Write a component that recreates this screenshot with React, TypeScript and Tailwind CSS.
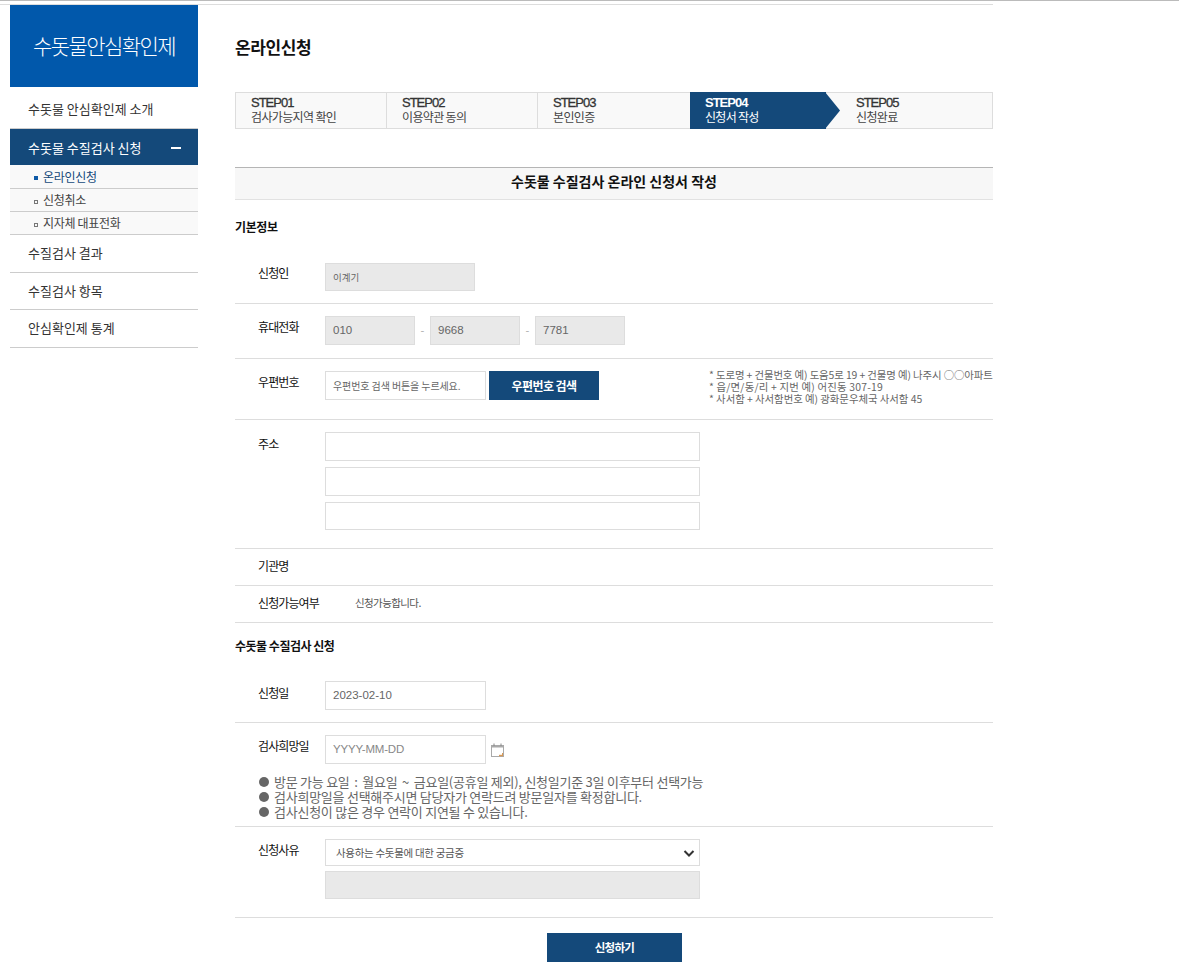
import React from "react";

const font = { fontFamily: '"Noto Sans CJK KR", "Noto Sans", sans-serif' };
const latin = { fontFamily: '"Liberation Sans", "Noto Sans CJK KR", sans-serif' };

function Step({ no, label, w, last }: { no: string; label: string; w: string; last?: boolean }) {
  return (
    <div className={`${w} h-full pl-[15px] pt-[3px] ${last ? "" : "border-r border-[#dddddd]"} text-[#333] leading-[14px]`}>
      <div style={latin} className="text-[13px] tracking-[-1px] [-webkit-text-stroke:0.3px_#333]">{no}</div>
      <div className="text-[12px] tracking-[-0.65px] text-[#444]">{label}</div>
    </div>
  );
}

function Label({ children, className = "" }: { children: React.ReactNode; className?: string }) {
  return <div className={`pl-[23px] text-[12px] leading-[16px] text-[#111] tracking-[-0.9px] shrink-0 ${className || "w-[90px]"}`}>{children}</div>;
}

function Box({ children, className = "" }: { children?: React.ReactNode; className?: string }) {
  return <div className={`border border-[#dddddd] flex items-center px-[7px] text-[#666] shrink-0 ${className}`}>{children}</div>;
}

function Side({ children, className }: { children: React.ReactNode; className: string }) {
  return <div className={`border-b border-[#cccccc] flex items-center pl-[18px] text-[13px] text-[#333] ${className}`}>{children}</div>;
}

function Sub({ children, active, h = "h-[23px]" }: { children: React.ReactNode; active?: boolean; h?: string }) {
  return (
    <div className={`${h} bg-[#f9f9f9] border-b border-[#cccccc] flex items-center pl-[24px] text-[12px] tracking-[-0.3px] ${active ? "text-[#14497a]" : "text-[#444]"}`}>
      <span className={`w-[4px] h-[4px] mr-[5px] mt-[3px] ${active ? "bg-[#0e5aa7]" : "border border-[#777]"}`} />
      {children}
    </div>
  );
}

function Bullet({ children }: { children: React.ReactNode }) {
  return (
    <li className="flex items-center">
      <span className="w-[10px] h-[10px] rounded-full bg-[#666] mr-[5px]" />
      <span>{children}</span>
    </li>
  );
}

export default function App() {
  return (
    <div style={font} className="w-full h-[970px] overflow-hidden bg-white border-t border-[#bbbbbb]">
      <div className="w-[993px] h-[4px] border-b border-[#dddddd]" />
      <div className="flex">
        <aside className="ml-[10px] w-[188px] shrink-0">
          <div className="h-[82px] bg-[#0158ab] text-white text-[21px] flex items-center justify-center tracking-[-1.6px] font-light">수돗물안심확인제</div>
          <Side className="h-[42px] pt-[3px]">수돗물 안심확인제 소개</Side>
          <div className="h-[36px] pt-[1px] bg-[#14497a] text-white flex items-center justify-between pl-[18px] pr-[17px] text-[13px]">
            수돗물 수질검사 신청
            <span className="w-[10px] h-[2px] bg-white" />
          </div>
          <Sub active h="h-[24px]">온라인신청</Sub>
          <Sub>신청취소</Sub>
          <Sub>지자체 대표전화</Sub>
          <Side className="h-[38px] pb-[2px]">수질검사 결과</Side>
          <Side className="h-[37px]">수질검사 항목</Side>
          <Side className="h-[38px] pb-[2px]">안심확인제 통계</Side>
        </aside>

        <main className="ml-[37px] w-[758px] shrink-0">
          <h1 className="h-[87px] pt-[30px] text-[17px] leading-[24px] font-bold text-[#111] tracking-[-0.4px]">온라인신청</h1>

          <div className="h-[37px] border border-[#dddddd] bg-[#f9f9f9] flex">
            <Step no="STEP01" label="검사가능지역 확인" w="w-[151px]" />
            <Step no="STEP02" label="이용약관 동의" w="w-[151px]" />
            <Step no="STEP03" label="본인인증" w="w-[152px]" last />
            <div className="relative w-[136px] h-[37px] -mt-px bg-[#14497a] text-white pl-[15px] pt-[4px] leading-[14px]">
              <div style={latin} className="text-[13px] font-bold tracking-[-1px]">STEP04</div>
              <div className="text-[12px] tracking-[-0.7px]">신청서 작성</div>
              <svg className="absolute left-[135px] top-0" width="15" height="37" viewBox="0 0 15 37"><path d="M0 0L15 18.5L0 37Z" fill="#14497a" /></svg>
            </div>
            <div className="pl-[30px] pt-[3px] text-[#333] leading-[14px]">
              <div style={latin} className="text-[13px] tracking-[-1px] [-webkit-text-stroke:0.3px_#333]">STEP05</div>
              <div className="text-[12px] tracking-[-0.65px] text-[#444]">신청완료</div>
            </div>
          </div>

          <div className="mt-[38px] h-[33px] pb-[4px] bg-[#f7f7f7] border-t border-b border-t-[#b5b5b5] border-b-[#e2e2e2] flex items-center justify-center text-[14px] font-bold text-[#111]">수돗물 수질검사 온라인 신청서 작성</div>

          <div className="h-[63px] pt-[19px] text-[12px] leading-[16px] font-bold text-[#111] tracking-[-0.4px]">기본정보</div>

          <div className="h-[41px] border-b border-[#dddddd] flex">
            <Label className="w-[90px] pt-[2px]">신청인</Label>
            <Box className="w-[150px] h-[28px] bg-[#e9e9e9] text-[9.5px]">이계기</Box>
          </div>

          <div className="h-[55px] border-b border-[#dddddd] flex pt-[12px]">
            <Label className="w-[90px] pt-[3px]">휴대전화</Label>
            <Box className="w-[90px] h-[29px] bg-[#e9e9e9] text-[11.5px]"><span style={latin}>010</span></Box>
            <span className="w-[15px] text-center text-[11px] leading-[29px] text-[#aaa]">-</span>
            <Box className="w-[90px] h-[29px] bg-[#e9e9e9] text-[11.5px]"><span style={latin}>9668</span></Box>
            <span className="w-[15px] text-center text-[11px] leading-[29px] text-[#aaa]">-</span>
            <Box className="w-[90px] h-[29px] bg-[#e9e9e9] text-[11.5px]"><span style={latin}>7781</span></Box>
          </div>

          <div className="h-[61px] border-b border-[#dddddd] flex pt-[12px]">
            <Label className="w-[90px] pt-[3px]">우편번호</Label>
            <Box className="w-[161px] h-[29px] text-[10px] tracking-[-0.1px]">우편번호 검색 버튼을 누르세요.</Box>
            <div className="ml-[3px] w-[110px] h-[29px] bg-[#14497a] text-white text-[12px] font-bold tracking-[-0.6px] flex items-center justify-center shrink-0">우편번호 검색</div>
            <div className="ml-[110px] -mt-[2px] text-[10.4px] leading-[12px] text-[#666] whitespace-nowrap tracking-[-0.1px]">
              <div>* 도로명 + 건물번호 예) 도움5로 19 + 건물명 예) 나주시 ○○아파트</div>
              <div className="tracking-[0.2px]">* 읍/면/동/리 + 지번 예) 어진동 307-19</div>
              <div className="tracking-[-0.03px]">* 사서함 + 사서함번호 예) 광화문우체국 사서함 45</div>
            </div>
          </div>

          <div className="h-[129px] border-b border-[#dddddd] flex pt-[12px]">
            <Label className="w-[90px] pt-[4px]">주소</Label>
            <div className="flex flex-col gap-[6px]">
              <Box className="w-[375px] h-[29px]" />
              <Box className="w-[375px] h-[29px]" />
              <Box className="w-[375px] h-[28px]" />
            </div>
          </div>

          <div className="h-[37px] pb-[2px] border-b border-[#dddddd] flex items-center">
            <Label className="w-[90px]">기관명</Label>
          </div>

          <div className="h-[37px] pb-[2px] border-b border-[#dddddd] flex items-center">
            <Label className="w-[120px]">신청가능여부</Label>
            <span className="text-[10.5px] text-[#555] tracking-[-0.6px]">신청가능합니다.</span>
          </div>

          <div className="h-[58px] pt-[15px] text-[12px] leading-[16px] font-bold text-[#111] tracking-[-0.5px]">수돗물 수질검사 신청</div>

          <div className="h-[42px] border-b border-[#dddddd] flex">
            <Label className="w-[90px] pt-[4px]">신청일</Label>
            <Box className="w-[161px] h-[29px] text-[11.5px]"><span style={latin}>2023-02-10</span></Box>
          </div>

          <div className="h-[104px] border-b border-[#dddddd] pt-[12px]">
            <div className="flex">
              <Label className="w-[90px] pt-[3px]">검사희망일</Label>
              <Box className="w-[161px] h-[29px] text-[11.5px] tracking-[-0.2px] text-[#888]"><span style={latin}>YYYY-MM-DD</span></Box>
              <svg className="ml-[5px] mt-[8px]" width="13" height="14" viewBox="0 0 13 14" fill="none">
                <rect x="0.5" y="2.5" width="12" height="11" fill="#fff" stroke="#a9a9a9" />
                <rect x="0.5" y="2.5" width="12" height="2" fill="#a9a9a9" />
                <path d="M3 0.5V3M10 0.5V3" stroke="#888" />
                <path d="M8 12.5H12" stroke="#d99a55" strokeWidth="1.4" />
                <path d="M11.5 10V12.5" stroke="#d99a55" />
              </svg>
            </div>
            <ul className="mt-[10px] pl-[24px] text-[13px] leading-[15px] text-[#666] tracking-[-0.25px] whitespace-nowrap">
              <Bullet>방문 가능 요일 <span className="mx-[2px]">:</span> 월요일 <span className="mx-[2px]">~</span> 금요일(공휴일 제외), 신청일기준 3일 이후부터 선택가능</Bullet>
              <Bullet>검사희망일을 선택해주시면 담당자가 연락드려 방문일자를 확정합니다.</Bullet>
              <Bullet>검사신청이 많은 경우 연락이 지연될 수 있습니다.</Bullet>
            </ul>
          </div>

          <div className="h-[91px] border-b border-[#dddddd] flex pt-[12px]">
            <Label className="w-[90px] pt-[3px]">신청사유</Label>
            <div className="flex flex-col gap-[5px]">
              <div className="w-[375px] h-[27px] border border-[#dddddd] flex items-center justify-between pl-[10px] pr-[4px] text-[10.5px] text-[#555] tracking-[-0.3px]">
                사용하는 수돗물에 대한 궁금증
                <svg width="12" height="12" viewBox="0 0 12 12" fill="none"><path d="M1.5 4L6 8.5L10.5 4" stroke="#333" strokeWidth="2" /></svg>
              </div>
              <div className="w-[375px] h-[28px] border border-[#dddddd] bg-[#e9e9e9]" />
            </div>
          </div>

          <div className="mt-[15px] ml-[312px] w-[135px] h-[29px] bg-[#14497a] text-white text-[11.5px] tracking-[-0.7px] font-bold flex items-center justify-center">신청하기</div>
        </main>
      </div>
    </div>
  );
}
